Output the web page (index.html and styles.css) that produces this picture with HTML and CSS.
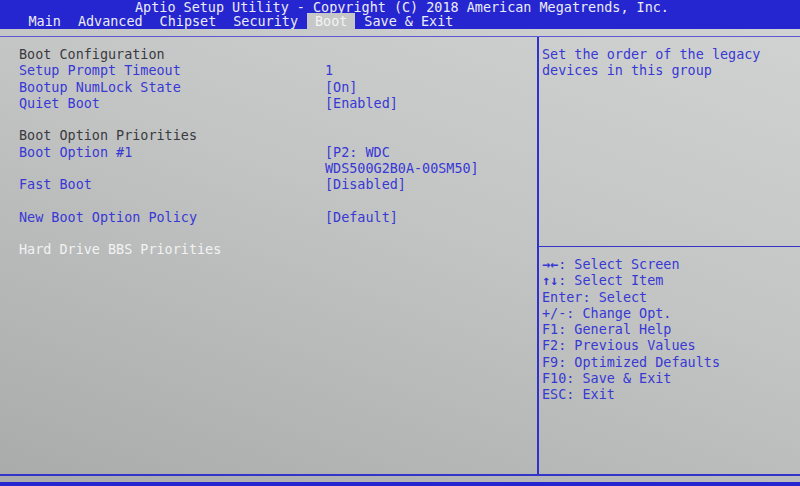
FILE: index.html
```html
<!DOCTYPE html>
<html lang="en">
<head>
    <meta charset="UTF-8">
    <title>Aptio Setup Utility</title>
    <link rel="stylesheet" href="styles.css">
</head>
<body>
    <div class="header">
        <div class="title">Aptio Setup Utility - Copyright (C) 2018 American Megatrends, Inc.</div>
        <div class="tabs">
            <span class="tab">Main</span>
            <span class="tab">Advanced</span>
            <span class="tab">Chipset</span>
            <span class="tab">Security</span>
            <span class="tab active">Boot</span>
            <span class="tab">Save &amp; Exit</span>
        </div>
    </div>

    <div class="frame">
        <div class="settings">
            <div class="row"><span class="heading">Boot Configuration</span></div>
            <div class="row"><span class="label">Setup Prompt Timeout</span><span class="value">1</span></div>
            <div class="row"><span class="label">Bootup NumLock State</span><span class="value">[On]</span></div>
            <div class="row"><span class="label">Quiet Boot</span><span class="value">[Enabled]</span></div>
            <div class="row blank"></div>
            <div class="row"><span class="heading">Boot Option Priorities</span></div>
            <div class="row"><span class="label">Boot Option #1</span><span class="value">[P2: WDC<br>WDS500G2B0A-00SM50]</span></div>
            <div class="row"><span class="label">Fast Boot</span><span class="value">[Disabled]</span></div>
            <div class="row blank"></div>
            <div class="row"><span class="label">New Boot Option Policy</span><span class="value">[Default]</span></div>
            <div class="row blank"></div>
            <div class="row"><span class="label selected">Hard Drive BBS Priorities</span></div>
        </div>

        <div class="side">
            <div class="help">Set the order of the legacy<br>devices in this group</div>
            <div class="keys">
                <div><b class="arrows">&rarr;&larr;</b>: Select Screen</div>
                <div><b class="arrows">&uarr;&darr;</b>: Select Item</div>
                <div>Enter: Select</div>
                <div>+/-: Change Opt.</div>
                <div>F1: General Help</div>
                <div>F2: Previous Values</div>
                <div>F9: Optimized Defaults</div>
                <div>F10: Save &amp; Exit</div>
                <div>ESC: Exit</div>
            </div>
        </div>
    </div>

    <div class="footer"></div>
</body>
</html>
```

FILE: styles.css
```css
body {
    margin: 0;
    width: 800px;
    height: 486px;
    overflow: hidden;
    font-family: 'DejaVu Sans Mono', 'Liberation Mono', monospace;
    font-size: 13.45px;
    background: linear-gradient(200deg, #d2d4d3 0%, #c3c5c5 45%, #a9abab 100%);
    display: flex;
    flex-direction: column;
}
.header {
    background-color: #2626d0;
    color: #ececf4;
    height: 29px;
}
.title {
    text-align: center;
    line-height: 15px;
    height: 13px;
    padding-left: 4px;
}
.tabs {
    display: flex;
    padding-left: 21px;
    line-height: 17px;
}
.tab {
    padding: 0 7.5px;
    margin-right: 2px;
    white-space: pre;
}
.tab.active {
    background-color: #c6c8c8;
    color: #f4f4f4;
}
.frame {
    margin-top: 7px;
    height: 437px;
    border-top: 1px solid #5a5ad6;
    border-bottom: 2px solid #3434c8;
    display: flex;
}
.settings {
    width: 518px;
    padding: 10px 0 0 19px;
    line-height: 16.25px;
}
.row {
    display: flex;
}
.row.blank {
    height: 16.25px;
}
.heading {
    color: #3a3a3e;
}
.label {
    width: 306px;
    color: #3838d4;
}
.label.selected {
    color: #f2f2f2;
}
.value {
    color: #3838d4;
}
.side {
    flex: 1;
    border-left: 2px solid #3030cc;
    display: flex;
    flex-direction: column;
    color: #3838d4;
    line-height: 16.25px;
}
.help {
    height: 199px;
    padding: 10px 0 0 3px;
    border-bottom: 1px solid #3434c8;
}
.keys {
    padding: 10px 0 0 3px;
}
.arrows {
    font-weight: bold;
}
.footer {
    margin-top: 6px;
    flex: 1;
    background-color: #2626d0;
}
```
